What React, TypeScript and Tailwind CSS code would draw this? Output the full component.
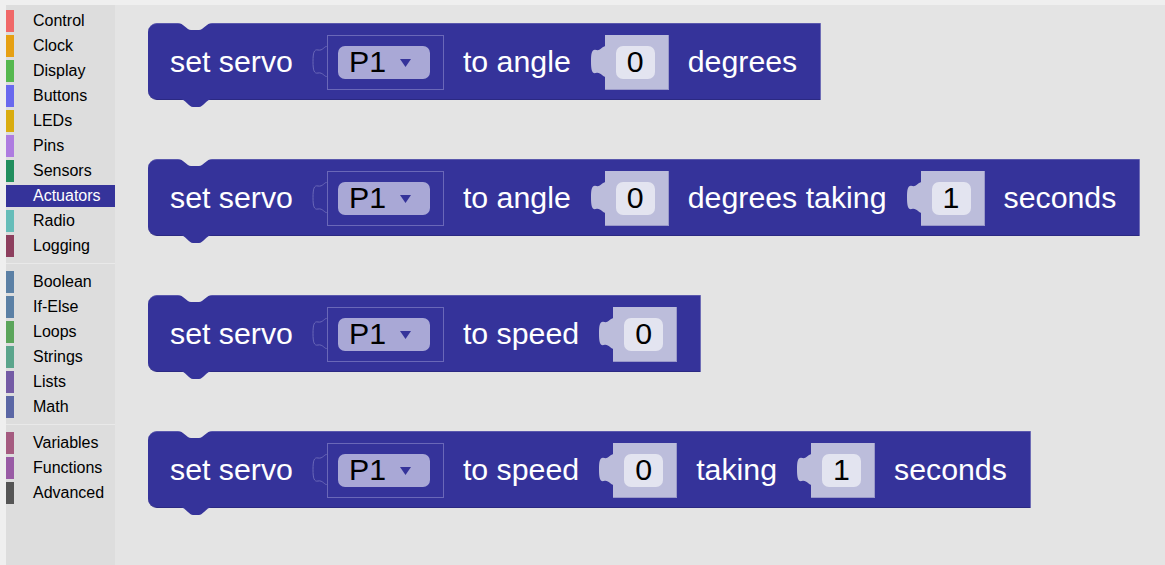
import React from 'react';

type Part =
  | { kind: 'text'; value: string }
  | { kind: 'drop'; value: string }
  | { kind: 'num'; value: string };

const categories = [
  [
    { name: 'Control', color: 'bg-[#f06868]' },
    { name: 'Clock', color: 'bg-[#e6a013]' },
    { name: 'Display', color: 'bg-[#55b84f]' },
    { name: 'Buttons', color: 'bg-[#6969ee]' },
    { name: 'LEDs', color: 'bg-[#d9ac0f]' },
    { name: 'Pins', color: 'bg-[#ae7ce0]' },
    { name: 'Sensors', color: 'bg-[#218e5d]' },
    { name: 'Actuators', color: 'bg-[#35339a]', active: true },
    { name: 'Radio', color: 'bg-[#66bdb9]' },
    { name: 'Logging', color: 'bg-[#8d3f5e]' },
  ],
  [
    { name: 'Boolean', color: 'bg-[#5b80a5]' },
    { name: 'If-Else', color: 'bg-[#5b80a5]' },
    { name: 'Loops', color: 'bg-[#5ba55b]' },
    { name: 'Strings', color: 'bg-[#5ba58c]' },
    { name: 'Lists', color: 'bg-[#745ba5]' },
    { name: 'Math', color: 'bg-[#5b67a5]' },
  ],
  [
    { name: 'Variables', color: 'bg-[#a55b80]' },
    { name: 'Functions', color: 'bg-[#995ba5]' },
    { name: 'Advanced', color: 'bg-[#555555]' },
  ],
];

const blocks: Part[][] = [
  [
    { kind: 'text', value: 'set servo' },
    { kind: 'drop', value: 'P1' },
    { kind: 'text', value: 'to angle' },
    { kind: 'num', value: '0' },
    { kind: 'text', value: 'degrees' },
  ],
  [
    { kind: 'text', value: 'set servo' },
    { kind: 'drop', value: 'P1' },
    { kind: 'text', value: 'to angle' },
    { kind: 'num', value: '0' },
    { kind: 'text', value: 'degrees taking' },
    { kind: 'num', value: '1' },
    { kind: 'text', value: 'seconds' },
  ],
  [
    { kind: 'text', value: 'set servo' },
    { kind: 'drop', value: 'P1' },
    { kind: 'text', value: 'to speed' },
    { kind: 'num', value: '0' },
  ],
  [
    { kind: 'text', value: 'set servo' },
    { kind: 'drop', value: 'P1' },
    { kind: 'text', value: 'to speed' },
    { kind: 'num', value: '0' },
    { kind: 'text', value: 'taking' },
    { kind: 'num', value: '1' },
    { kind: 'text', value: 'seconds' },
  ],
];

// puzzle tab on the left side of an input slot
const Tab = ({ fill, stroke }: { fill: string; stroke?: string }) => (
  <svg width="16" height="31" viewBox="0 0 16 31" className="mt-[11px] -mr-px shrink-0">
    <path
      d="M16 0 L16 31 C12 31 11 26 6 27 C2 28 1 24 1 15.5 C1 7 2 3 6 4 C11 5 12 0 16 0 Z"
      fill={fill}
      stroke={stroke ?? 'none'}
      strokeWidth="1"
    />
  </svg>
);

const Slot = ({ part }: { part: Part }) => {
  if (part.kind === 'drop') {
    return (
      <div className="flex items-start">
        <Tab fill="#35339a" stroke="#6a68b8" />
        <div className="flex h-[55px] items-center border border-[#6a68b8] pl-[10px] pr-[13px]">
          <div className="flex h-[33px] w-[92px] items-center rounded-[7px] bg-[#a9a8d6] pl-[11px]">
            <span className="text-[30.3px] leading-none text-black">{part.value}</span>
            <svg width="11" height="8" viewBox="0 0 11 8" className="ml-[14px]">
              <path d="M0 0 L11 0 L5.5 8 Z" fill="#35339a" />
            </svg>
          </div>
        </div>
      </div>
    );
  }
  return (
    <div className="flex items-start">
      <Tab fill="#bcbddb" />
      <div className="flex h-[55px] items-center border-b border-r border-[#9a99c9] bg-[#bcbddb] pl-[11px] pr-[13px]">
        <div className="flex h-[33px] w-[39px] items-center justify-center rounded-[7px] bg-[#e3e4f0] text-[30.3px] leading-none text-black">
          {part.value}
        </div>
      </div>
    </div>
  );
};

const Block = ({ parts }: { parts: Part[] }) => (
  <div className="relative flex h-[77px] items-center gap-[19px] self-start rounded-l-[9px] border-t border-r border-b border-t-[#5a58ad] border-r-[#6f6db6] border-b-[#2b2982] bg-[#35339a] pt-[2px] pl-[22px] pr-[23px]">
    <svg width="34" height="8" viewBox="0 0 34 8" className="absolute -top-px left-[30px]">
      <path d="M0 0 C5 0 9 7 13 7 L21 7 C25 7 29 0 34 0 Z" fill="#e4e4e4" />
    </svg>
    <svg width="32" height="9" viewBox="0 0 32 9" className="absolute -bottom-[9px] left-[32px]">
      <path d="M0 0 C5 0 9 8 13 8 L19 8 C23 8 27 0 32 0 Z" fill="#35339a" />
    </svg>
    {parts.map((p, i) =>
      p.kind === 'text' ? (
        <span key={i} className="whitespace-nowrap text-[30.3px] leading-none text-white">
          {p.value}
        </span>
      ) : (
        <Slot key={i} part={p} />
      )
    )}
  </div>
);

const App = () => {
  return (
    <div className="flex h-[565px] w-[1165px] overflow-hidden bg-[#efefef] pt-[5px] pl-[6px] font-['Liberation_Sans',Arial,sans-serif]">
      <nav className="w-[109px] shrink-0 bg-[#dddddd] pt-[5px]">
        {categories.map((group, gi) => (
          <div key={gi}>
            {gi > 0 && <div className="mt-[6px] mb-[7px] h-px bg-[#e9e9e9]" />}
            {group.map((c) => (
              <div
                key={c.name}
                className={
                  'mb-[3px] flex h-[22px] items-center ' +
                  ('active' in c && c.active ? 'bg-[#35339a] text-white' : 'text-black')
                }
              >
                <div className={'h-full w-[8px] ' + c.color} />
                <span className="ml-[19px] text-[16px] leading-none">{c.name}</span>
              </div>
            ))}
          </div>
        ))}
      </nav>
      <main className="flex flex-1 flex-col gap-[59px] bg-[#e4e4e4] pl-[33px] pt-[18px]">
        {blocks.map((b, i) => (
          <Block key={i} parts={b} />
        ))}
      </main>
    </div>
  );
};

export default App;
